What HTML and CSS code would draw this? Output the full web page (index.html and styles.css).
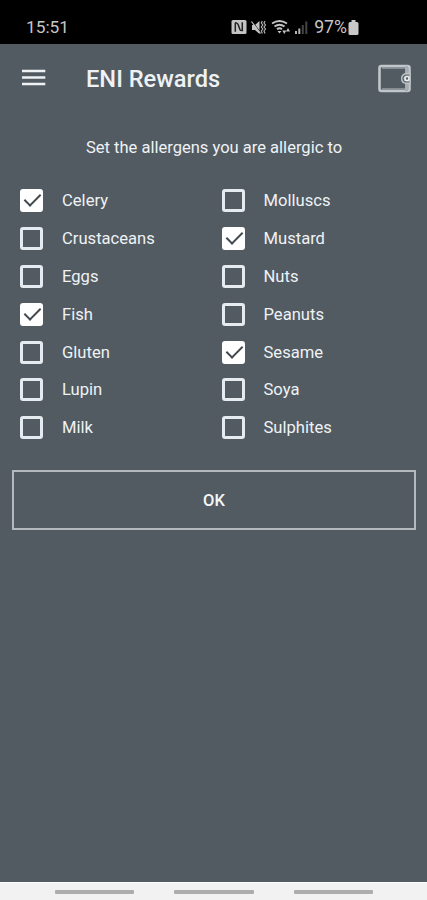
FILE: index.html
```html
<!DOCTYPE html>
<html lang="en">
<head>
<meta charset="utf-8">
<title>ENI Rewards</title>
<link rel="stylesheet" href="styles.css">
</head>
<body>
<div class="status">
  <span class="clock">15:51</span>
  <div class="indicators">
    <svg class="status-icons" width="79" height="16" viewBox="0 0 79 16">
      <rect x=".5" y="1" width="15" height="14" rx="1.500" fill="#c4c4c4"/>
      <path d="M4.300 12.800V4.400q0-.8 1-.5 1.500.5 2 2l1.600 4.500q.5 1.300 2.400 1.200V3.300" fill="none" stroke="#222" stroke-width="1.500"/>
      <path d="M21 6h3l4.500-4v13L24 11h-3z" fill="#c4c4c4"/>
      <path d="M20.500 1.500l9.500 12.500" stroke="#000" stroke-width="1"/>
      <path d="M20.500 2.500l9 12" stroke="#c4c4c4" stroke-width="1.200"/>
      <path d="M31.300 2l-1 2 1.500 2-1.500 2 1.500 2-1.500 2 1 2.500M34 2l-1 2 1.500 2-1.500 2 1.500 2-1.500 2 1 2.500" fill="none" stroke="#b0b0b0" stroke-width="1.200"/>
      <path d="M41 4.500q7.500-5 15 0M43.500 7.500q5-3.500 10 0M46 10.300q2.500-2 5 0" fill="none" stroke="#c4c4c4" stroke-width="1.900"/>
      <path d="M46.500 12h4l-2 2.500z" fill="#c4c4c4"/>
      <path d="M51.300 11.500l2 3.500 2-3.500zM55 12.500l2-3.500 2 3.500z" fill="#c4c4c4"/>
      <path d="M64 12h2v3h-2zM67.300 9.500h2V15h-2z" fill="#b4b4b4"/>
      <path d="M70.800 6h2v9h-2zM74.300 2.500h2V15h-2z" fill="#444"/>
    </svg>
    <span class="percent">97%</span>
    <svg class="battery" width="11" height="15" viewBox="0 0 11 15"><path d="M3.500 0h4v2H9q1.500 0 1.500 1.500v10Q10.500 15 9 15H2Q.5 15 .5 13.500v-10Q.5 2 2 2h1.500z" fill="#c8c8c8"/></svg>
  </div>
</div>
<header class="appbar">
  <svg class="menu" width="24" height="18" viewBox="0 0 24 18"><path d="M0 2h23.300M0 8.500h23.300M0 15h23.300" stroke="#eef2f5" stroke-width="2.700"/></svg>
  <h1 class="title">ENI Rewards</h1>
  <svg class="wallet" width="35" height="29" viewBox="0 0 35 29">
    <rect x="2.500" y="2" width="30" height="25" rx="2" fill="none" stroke="#c0c7cb" stroke-width="2.600"/>
    <path d="M5 4h24M5 25h24" stroke="#969ea3" stroke-width="1.400"/>
    <path d="M29.500 2v25" stroke="#a6aeb3" stroke-width="3"/>
    <path d="M33.500 9H29q-5 .5-5 5.500t5 5.500h4.500z" fill="#c0c7cb"/>
    <path d="M32.500 11h-3.500q-3 .4-3 3.500t3 3.500h3.500" fill="none" stroke="#566068" stroke-width="1.200"/>
    <circle cx="30" cy="14.500" r="1.900" fill="#566068" stroke="#eef2f4" stroke-width="1.300"/>
  </svg>
</header>
<main class="content">
  <p class="intro">Set the allergens you are allergic to</p>
  <form class="allergens">
    <label class="option"><input type="checkbox" class="box" checked><span>Celery</span></label>
    <label class="option"><input type="checkbox" class="box"><span>Crustaceans</span></label>
    <label class="option"><input type="checkbox" class="box"><span>Eggs</span></label>
    <label class="option"><input type="checkbox" class="box" checked><span>Fish</span></label>
    <label class="option"><input type="checkbox" class="box"><span>Gluten</span></label>
    <label class="option"><input type="checkbox" class="box"><span>Lupin</span></label>
    <label class="option"><input type="checkbox" class="box"><span>Milk</span></label>
    <label class="option"><input type="checkbox" class="box"><span>Molluscs</span></label>
    <label class="option"><input type="checkbox" class="box" checked><span>Mustard</span></label>
    <label class="option"><input type="checkbox" class="box"><span>Nuts</span></label>
    <label class="option"><input type="checkbox" class="box"><span>Peanuts</span></label>
    <label class="option"><input type="checkbox" class="box" checked><span>Sesame</span></label>
    <label class="option"><input type="checkbox" class="box"><span>Soya</span></label>
    <label class="option"><input type="checkbox" class="box"><span>Sulphites</span></label>
  </form>
  <button class="ok" type="button">OK</button>
</main>
<nav class="navbar"><i class="hint"></i><i class="hint"></i><i class="hint"></i></nav>
</body>
</html>
```
FILE: styles.css
```css
* { box-sizing: border-box; }
body {
  margin: 0;
  height: 900px;
  display: flex;
  flex-direction: column;
  overflow: hidden;
  background: #535b62;
  color: #eef2f5;
  font-family: Roboto, sans-serif;
}
.status {
  height: 44px;
  flex: none;
  padding: 10px 68px 0 26px;
  display: flex;
  justify-content: space-between;
  background: #000;
  color: #c6c6c6;
  font-size: 17.300px;
  line-height: 35px;
}
.clock, .percent { height: 34px; }
.percent { font-size: 17.700px; }
.indicators { display: flex; }
.status-icons { margin: 9px 4px 0 0; }
.battery { margin: 10px 0 0 1px; }
.appbar {
  height: 68px;
  flex: none;
  display: flex;
  align-items: center;
  padding: 0 15px 0 22px;
}
.title {
  margin: 2px 0 0 40px;
  font-size: 23.650px;
  font-weight: 500;
  line-height: 30px;
}
.wallet { margin-left: auto; }
.content { flex: 1; padding: 24px 11px 0 12px; }
.intro {
  margin: 0;
  text-align: center;
  font-size: 16.550px;
  line-height: 23px;
}
.allergens {
  margin-top: 22.500px;
  padding-left: 8px;
  display: grid;
  grid-auto-flow: column;
  grid-template-rows: repeat(7, 37.900px);
  grid-template-columns: 201.500px 1fr;
}
.option {
  display: flex;
  align-items: center;
  gap: 19px;
  font-size: 16.600px;
}
.box {
  appearance: none;
  flex: none;
  width: 23px;
  height: 23px;
  margin: 0;
  border: 3px solid #e6ebef;
  border-radius: 3px;
}
.box:checked {
  border-color: #fff;
  background: #fff;
}
.box:checked::after {
  content: "";
  display: block;
  width: 7px;
  height: 14px;
  margin: -2px 0 0 5px;
  border: solid #41484e;
  border-width: 0 2px 2px 0;
  transform: rotate(45deg);
}
.ok {
  display: block;
  width: 404px;
  height: 60px;
  margin-top: 23px;
  padding: 1px 0 0;
  border: 2px solid #b3b9bd;
  background: transparent;
  color: #f4f7f9;
  font: 500 16.500px Roboto, sans-serif;
}
.navbar {
  height: 18px;
  flex: none;
  display: flex;
  gap: 40px;
  padding: 7px 0 0 54.500px;
  background: #f2f2f2;
  border-top: 1px solid #fff;
}
.hint {
  width: 79.500px;
  height: 4px;
  border-radius: 1px;
  background: #adadad;
}
```
